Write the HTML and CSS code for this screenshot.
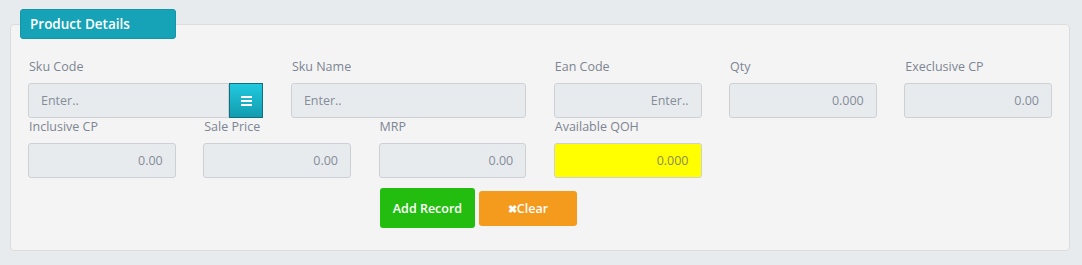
FILE: index.html
```html
<!DOCTYPE html>
<html lang="en">

<head>
    <meta charset="UTF-8">
    <title>Product Details</title>
    <link rel="stylesheet" href="styles.css">
</head>

<body>
    <div class="box">
        <div class="box-title">Product Details</div>
        <div class="box-body">
            <div class="row">
                <div class="field span3">
                    <label>Sku Code</label>
                    <div class="group">
                        <input type="text" placeholder="Enter..">
                        <span class="btn-list">
                            <svg width="11" height="10" viewBox="0 0 11 10">
                                <rect x="0" y="0" width="11" height="2" fill="#fff" />
                                <rect x="0" y="4" width="11" height="2" fill="#fff" />
                                <rect x="0" y="8" width="11" height="2" fill="#fff" />
                            </svg>
                        </span>
                    </div>
                </div>
                <div class="field span3">
                    <label>Sku Name</label>
                    <input type="text" placeholder="Enter..">
                </div>
                <div class="field span2">
                    <label>Ean Code</label>
                    <input type="text" class="num" placeholder="Enter..">
                </div>
                <div class="field span2">
                    <label>Qty</label>
                    <input type="text" class="num" value="0.000">
                </div>
                <div class="field span2">
                    <label>Execlusive CP</label>
                    <input type="text" class="num" value="0.00">
                </div>

                <div class="field span2">
                    <label>Inclusive CP</label>
                    <input type="text" class="num" value="0.00">
                </div>
                <div class="field span2">
                    <label>Sale Price</label>
                    <input type="text" class="num" value="0.00">
                </div>
                <div class="field span2">
                    <label>MRP</label>
                    <input type="text" class="num" value="0.00">
                </div>
                <div class="field span2">
                    <label>Available QOH</label>
                    <input type="text" class="num qoh" value="0.000">
                </div>
            </div>
            <div class="actions">
                <button class="btn btn-add">Add Record</button>
                <button class="btn btn-clear"><span class="x">&#10006;</span>Clear</button>
            </div>
        </div>
    </div>
</body>
</html>
```

FILE: styles.css
```css
* {
    padding: 0;
    margin: 0;
    box-sizing: border-box;
}

body {
    background: #e8ebee;
    font-family: "Open Sans", "Noto Sans", sans-serif;
    font-size: 12.5px;
    color: #7a8290;
    padding: 9px 12px 0 10px;
}

.box {
    position: relative;
    background: #f4f4f4;
    border: 1px solid #dcdcdc;
    border-radius: 4px;
    margin-top: 15px;
    height: 227px;
}

.box-title {
    position: absolute;
    left: 9px;
    top: -16px;
    width: 156px;
    height: 30px;
    line-height: 29px;
    padding-left: 9px;
    background: #17a3b7;
    border: 1px solid #1596a8;
    border-radius: 3px;
    color: #fff;
    font-size: 13.5px;
    font-weight: 600;
}

.box-body {
    padding: 33px 17px 0 17px;
}

.row {
    display: grid;
    grid-template-columns: repeat(12, 1fr);
    column-gap: 27.5px;
}

.span2 {
    grid-column: span 2;
}

.span3 {
    grid-column: span 3;
}

.field label {
    display: block;
    height: 18px;
    line-height: 18px;
    margin-bottom: 7px;
    padding-left: 1px;
    color: #7d8593;
}

.field input {
    display: block;
    width: 100%;
    height: 35px;
    padding: 0 12px;
    background: #e8ebee;
    border: 1px solid #cdd1d5;
    border-radius: 3px;
    font-family: inherit;
    font-size: 12.5px;
    color: #858d99;
    outline: none;
}

.field input::placeholder {
    color: #858d99;
}

.field input.num {
    text-align: right;
}

.field input.qoh {
    background: #ffff00;
    color: #8b8b55;
}

.group {
    display: flex;
}

.group input {
    border-radius: 3px 0 0 3px;
}

.btn-list {
    flex: 0 0 34px;
    height: 35px;
    display: flex;
    align-items: center;
    justify-content: center;
    background: linear-gradient(#20c9de, #139cb0);
    border: 1px solid #0f6f7d;
}

.actions {
    display: flex;
    align-items: center;
    gap: 4px;
    padding-left: 352px;
    margin-top: 10px;
}

.btn {
    border: 0;
    border-radius: 3px;
    color: #fff;
    font-family: inherit;
    font-size: 12.5px;
    font-weight: 600;
    cursor: pointer;
}

.btn-add {
    width: 95px;
    height: 40px;
    background: #23bd0f;
}

.btn-clear {
    width: 98px;
    height: 35px;
    background: #f49a1d;
}

.btn-clear .x {
    font-size: 11px;
}
```
